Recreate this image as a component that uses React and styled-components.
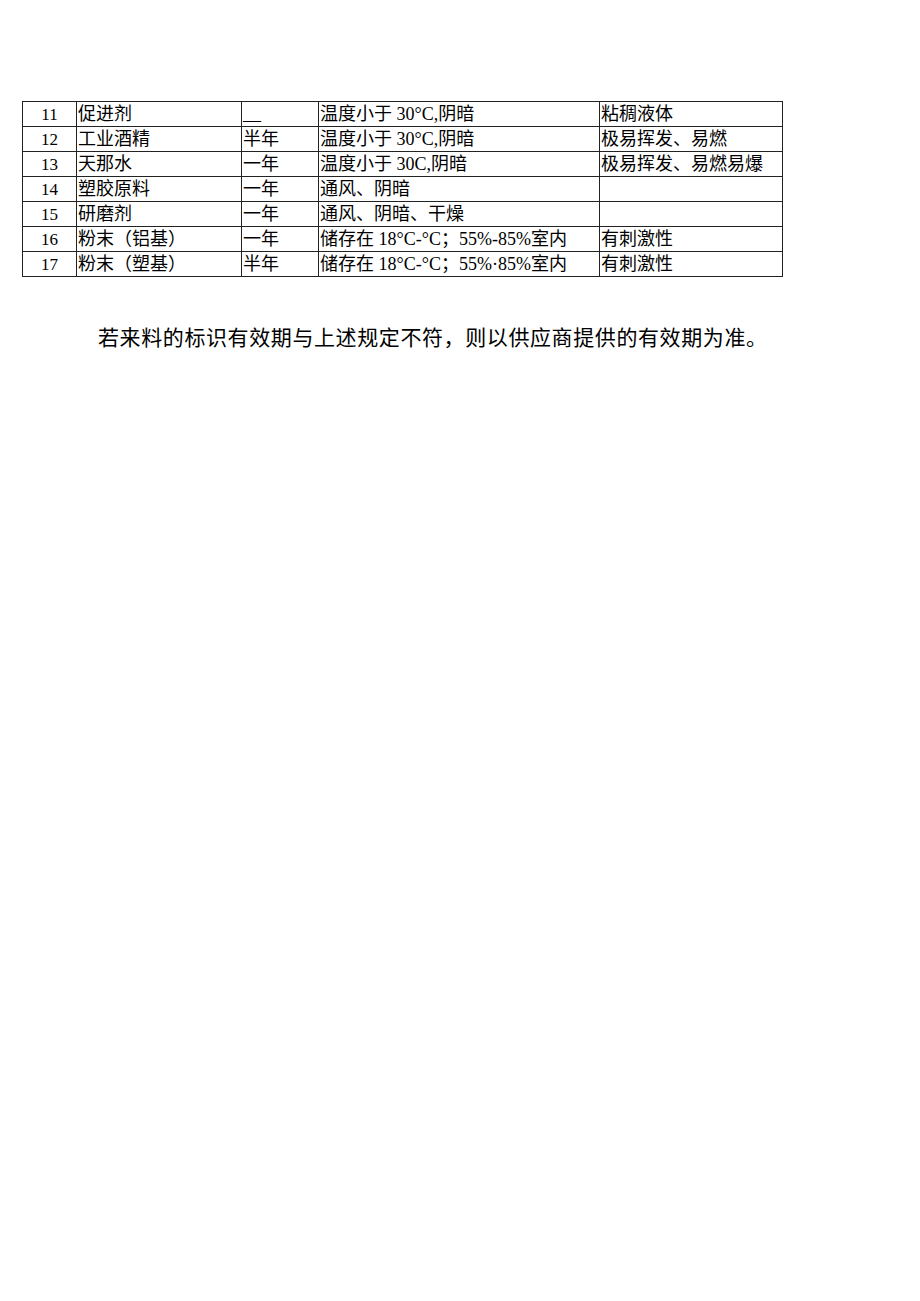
import React from "react";
import styled, { createGlobalStyle } from "styled-components";

const Global = createGlobalStyle`
  html, body { margin: 0; padding: 0; background: #fff; }
  body { font-family: "Liberation Serif", "Noto Sans CJK SC", serif; color: #000; }
`;

const Page = styled.div`
  width: 920px;
  min-height: 1301px;
  box-sizing: border-box;
  padding: 101px 0 0 22px;
`;

const Table = styled.table`
  border-collapse: collapse;
  table-layout: fixed;
  width: 760px;
`;

const Col = styled.col`
  width: ${(p) => p.$w}px;
`;

const Row = styled.tr`
  height: 25px;
`;

const Cell = styled.td`
  border: 1px solid #222;
  padding: 0 0 0 1px;
  height: 24px;
  box-sizing: border-box;
  font-size: 18px;
  line-height: 22px;
  font-weight: 400;
  white-space: nowrap;
  overflow: hidden;
  vertical-align: middle;
  text-align: left;
`;

const NumCell = styled(Cell)`
  text-align: center;
  font-size: 17px;
  padding: 2px 0 0 0;
`;

const Note = styled.p`
  margin: 47px 0 0 76px;
  font-size: 21px;
  line-height: 28px;
  font-weight: 400;
  letter-spacing: 0.6px;
`;

const widths = [54, 165, 77, 281, 183];

const rows = [
  ["11", "促进剂", "__", "温度小于 30°C,阴暗", "粘稠液体"],
  ["12", "工业酒精", "半年", "温度小于 30°C,阴暗", "极易挥发、易燃"],
  ["13", "天那水", "一年", "温度小于 30C,阴暗", "极易挥发、易燃易爆"],
  ["14", "塑胶原料", "一年", "通风、阴暗", ""],
  ["15", "研磨剂", "一年", "通风、阴暗、干燥", ""],
  ["16", "粉末（铝基）", "一年", "储存在 18°C-°C；55%-85%室内", "有刺激性"],
  ["17", "粉末（塑基）", "半年", "储存在 18°C-°C；55%·85%室内", "有刺激性"],
];

export default function App() {
  return (
    <>
      <Global />
      <Page>
        <Table>
          <colgroup>
            {widths.map((w, i) => (
              <Col key={i} $w={w} />
            ))}
          </colgroup>
          <tbody>
            {rows.map((r) => (
              <Row key={r[0]}>
                <NumCell>{r[0]}</NumCell>
                <Cell>{r[1]}</Cell>
                <Cell>{r[2]}</Cell>
                <Cell>{r[3]}</Cell>
                <Cell>{r[4]}</Cell>
              </Row>
            ))}
          </tbody>
        </Table>
        <Note>若来料的标识有效期与上述规定不符，则以供应商提供的有效期为准。</Note>
      </Page>
    </>
  );
}
